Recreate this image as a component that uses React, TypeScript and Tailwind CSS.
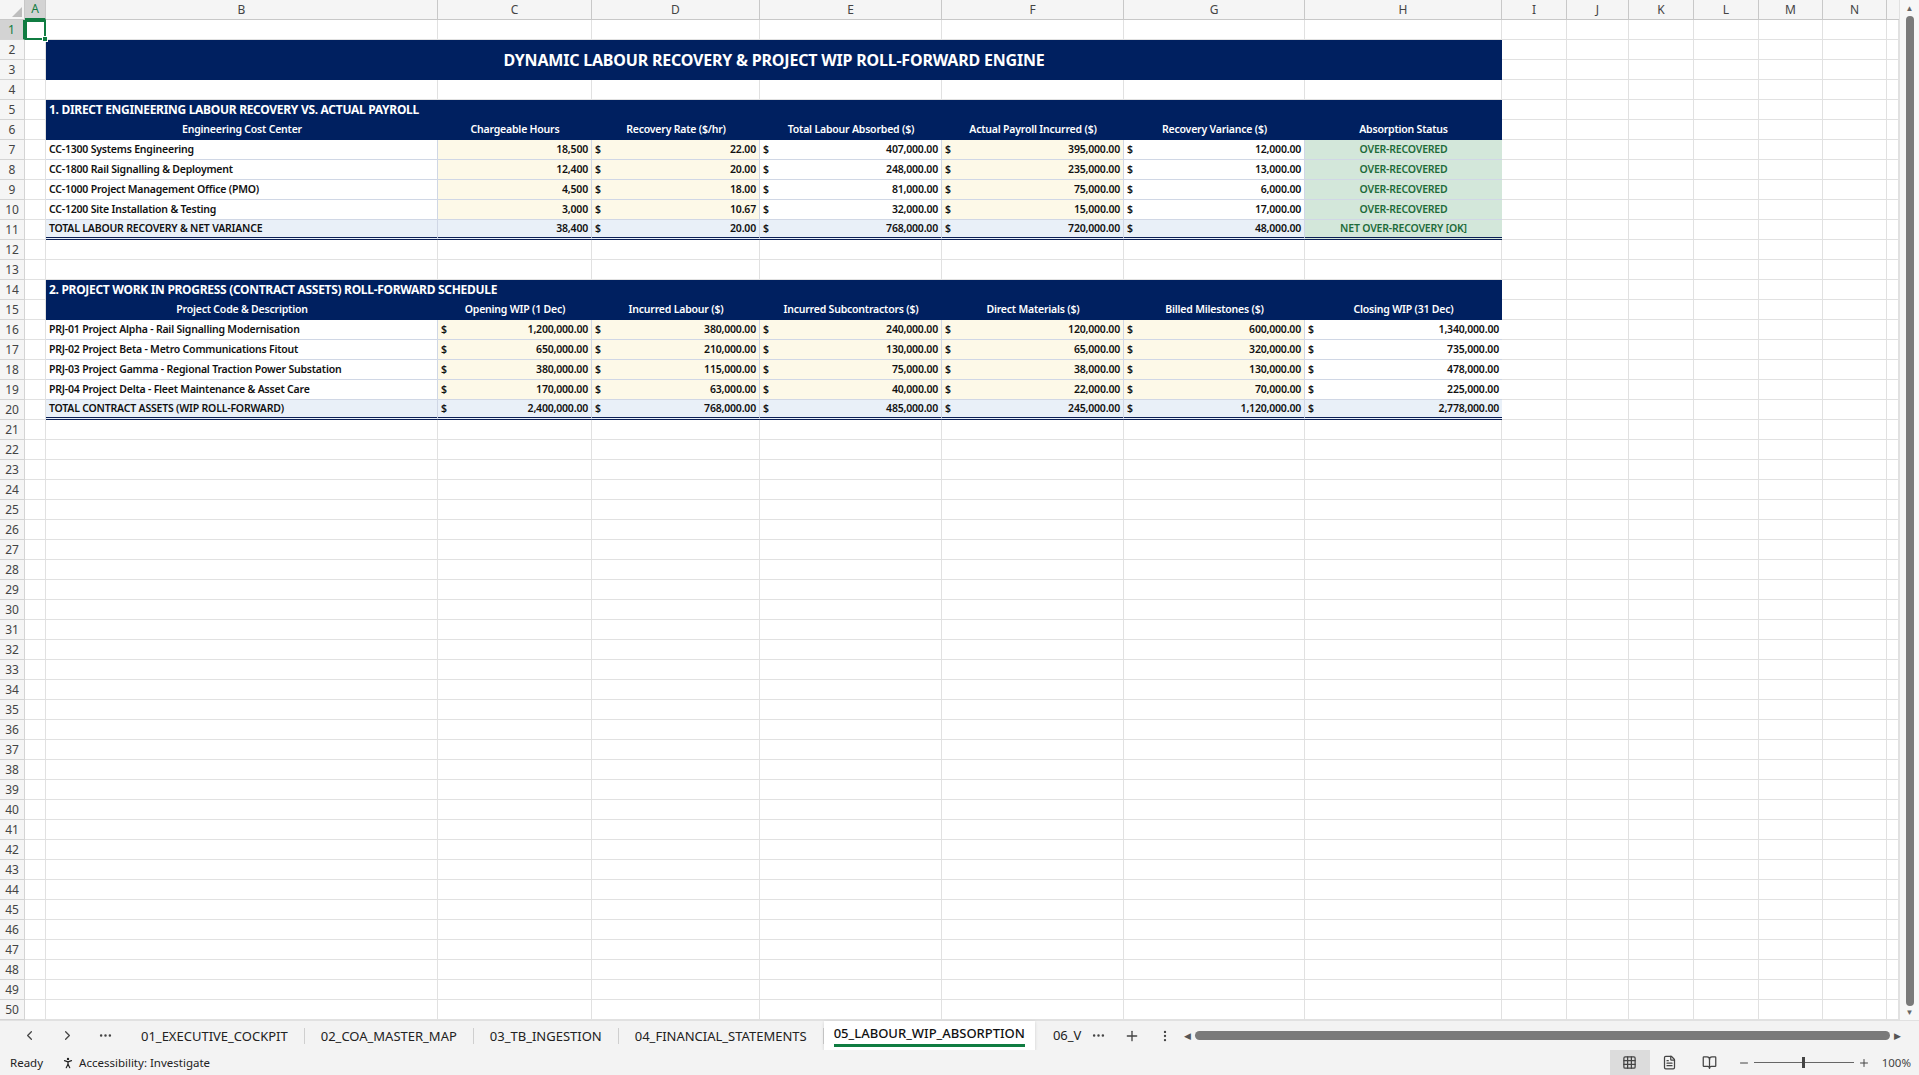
import { ChevronLeft, ChevronRight, MoreHorizontal, Plus, MoreVertical, Minus, PersonStanding, Grid3x3, FileText, BookOpen } from 'lucide-react'

const COLS = ['A', 'B', 'C', 'D', 'E', 'F', 'G', 'H', 'I', 'J', 'K', 'L', 'M', 'N']
const FONT = { fontFamily: '"Noto Sans", "Open Sans", sans-serif' }

type Cell = { t?: string; cur?: boolean; align?: 'l' | 'r' | 'c'; bg?: string; color?: string }

const Y = 'bg-[#fdf9e8]'
const W = 'bg-white'
const T = 'bg-[#e9f0f8]'
const G = 'bg-[#d3e7da]'

const labour = [
  ['CC-1300 Systems Engineering', '18,500', '22.00', '407,000.00', '395,000.00', '12,000.00'],
  ['CC-1800 Rail Signalling & Deployment', '12,400', '20.00', '248,000.00', '235,000.00', '13,000.00'],
  ['CC-1000 Project Management Office (PMO)', '4,500', '18.00', '81,000.00', '75,000.00', '6,000.00'],
  ['CC-1200 Site Installation & Testing', '3,000', '10.67', '32,000.00', '15,000.00', '17,000.00'],
]

const wip = [
  ['PRJ-01 Project Alpha - Rail Signalling Modernisation', '1,200,000.00', '380,000.00', '240,000.00', '120,000.00', '600,000.00', '1,340,000.00'],
  ['PRJ-02 Project Beta - Metro Communications Fitout', '650,000.00', '210,000.00', '130,000.00', '65,000.00', '320,000.00', '735,000.00'],
  ['PRJ-03 Project Gamma - Regional Traction Power Substation', '380,000.00', '115,000.00', '75,000.00', '38,000.00', '130,000.00', '478,000.00'],
  ['PRJ-04 Project Delta - Fleet Maintenance & Asset Care', '170,000.00', '63,000.00', '40,000.00', '22,000.00', '70,000.00', '225,000.00'],
]

function TableCell({ c, total, last }: { c: Cell; total?: boolean; last?: boolean }) {
  return (
    <div
      className={`flex items-center px-[3px] text-[10.5px] font-semibold tracking-[-0.2px] ${c.bg ?? W} ${c.color ?? 'text-[#111]'} ${
        total ? 'border-b-[3px] border-double border-b-[#0b1f55]' : 'border-b border-b-[#d0d7e5]'
      } ${last ? '' : 'border-r border-r-[#d0d7e5]'} ${
        c.cur ? 'justify-between' : c.align === 'r' ? 'justify-end' : c.align === 'c' ? 'justify-center' : 'justify-start'
      }`}
    >
      {c.cur && <span>$</span>}
      <span className="whitespace-nowrap">{c.t}</span>
    </div>
  )
}

function Table({ rows, totalRow }: { rows: Cell[][]; totalRow: Cell[] }) {
  return (
    <>
      {rows.map((r, i) => (
        <Row key={i} n={0} cells={r} />
      ))}
      <Row n={0} cells={totalRow} total />
    </>
  )
}

function Row({ cells, total }: { n: number; cells: Cell[]; total?: boolean }) {
  return (
    <>
      {cells.map((c, i) => (
        <TableCell key={i} c={c} total={total} last={i === cells.length - 1} />
      ))}
    </>
  )
}

function Empty({ n }: { n: number }) {
  return (
    <>
      {Array.from({ length: n }).map((_, i) => (
        <div key={i} className="border-r border-b border-[#e1e1e1]" />
      ))}
    </>
  )
}

function RowHead({ n, active }: { n: number; active?: boolean }) {
  return (
    <div
      className={`flex items-center justify-center border-r border-b border-[#d4d4d4] text-[12px] ${
        active ? 'bg-[#d3d3d3] text-[#107c41] border-r-2 border-r-[#107c41]' : 'bg-[#f5f5f5] text-[#444]'
      }`}
    >
      {n}
    </div>
  )
}

function Navy({ children, span, className = '' }: { children?: React.ReactNode; span: string; className?: string }) {
  return <div className={`${span} flex items-center bg-[#002060] text-white ${className}`}>{children}</div>
}

export default function App() {
  const labourRows: Cell[][] = labour.map(r => [
    { t: r[0] },
    { t: r[1], align: 'r', bg: Y },
    { t: r[2], cur: true, bg: Y },
    { t: r[3], cur: true },
    { t: r[4], cur: true, bg: Y },
    { t: r[5], cur: true },
    { t: 'OVER-RECOVERED', align: 'c', bg: G, color: 'text-[#1e6b3a]' },
  ])
  const labourTotal: Cell[] = [
    { t: 'TOTAL LABOUR RECOVERY & NET VARIANCE', bg: T },
    { t: '38,400', align: 'r', bg: T },
    { t: '20.00', cur: true, bg: T },
    { t: '768,000.00', cur: true, bg: T },
    { t: '720,000.00', cur: true, bg: T },
    { t: '48,000.00', cur: true, bg: T },
    { t: 'NET OVER-RECOVERY [OK]', align: 'c', bg: G, color: 'text-[#1e6b3a]' },
  ]
  const wipRows: Cell[][] = wip.map(r => [
    { t: r[0] },
    { t: r[1], cur: true, bg: Y },
    { t: r[2], cur: true, bg: Y },
    { t: r[3], cur: true, bg: Y },
    { t: r[4], cur: true, bg: Y },
    { t: r[5], cur: true, bg: Y },
    { t: r[6], cur: true },
  ])
  const wipTotal: Cell[] = ['TOTAL CONTRACT ASSETS (WIP ROLL-FORWARD)', '2,400,000.00', '768,000.00', '485,000.00', '245,000.00', '1,120,000.00', '2,778,000.00'].map(
    (t, i) => (i === 0 ? { t, bg: T } : { t, cur: true, bg: T }),
  )

  const h1 = ['Engineering Cost Center', 'Chargeable Hours', 'Recovery Rate ($/hr)', 'Total Labour Absorbed ($)', 'Actual Payroll Incurred ($)', 'Recovery Variance ($)', 'Absorption Status']
  const h2 = ['Project Code & Description', 'Opening WIP (1 Dec)', 'Incurred Labour ($)', 'Incurred Subcontractors ($)', 'Direct Materials ($)', 'Billed Milestones ($)', 'Closing WIP (31 Dec)']

  const rows: React.ReactNode[] = []
  const tail = <Empty n={7} />
  for (let n = 1; n <= 50; n++) {
    if (n === 1) {
      rows.push(
        <div key={n} className="contents">
          <RowHead n={1} active />
          <div className="relative border-2 border-[#107c41]">
            <div className="absolute -right-[4px] -bottom-[4px] size-[6px] border border-white bg-[#107c41]" />
          </div>
          <Empty n={7} />
          {tail}
        </div>,
      )
    } else if (n === 2 || n === 3) {
      rows.push(
        <div key={n} className="contents">
          <RowHead n={n} />
          <Empty n={1} />
          {n === 2 && (
            <Navy span="col-span-7 row-span-2 justify-center text-[16px] font-bold tracking-[-0.2px]">
              DYNAMIC LABOUR RECOVERY &amp; PROJECT WIP ROLL-FORWARD ENGINE
            </Navy>
          )}
          {tail}
        </div>,
      )
    } else if (n === 5 || n === 14) {
      rows.push(
        <div key={n} className="contents">
          <RowHead n={n} />
          <Empty n={1} />
          <Navy span="col-span-7 px-[3px] text-[12px] font-bold tracking-[-0.3px]">
            {n === 5 ? '1. DIRECT ENGINEERING LABOUR RECOVERY VS. ACTUAL PAYROLL' : '2. PROJECT WORK IN PROGRESS (CONTRACT ASSETS) ROLL-FORWARD SCHEDULE'}
          </Navy>
          {tail}
        </div>,
      )
    } else if (n === 6 || n === 15) {
      rows.push(
        <div key={n} className="contents">
          <RowHead n={n} />
          <Empty n={1} />
          {(n === 6 ? h1 : h2).map(h => (
            <Navy key={h} span="justify-center text-[10.5px] font-semibold tracking-[-0.2px] whitespace-nowrap">
              {h}
            </Navy>
          ))}
          {tail}
        </div>,
      )
    } else if ((n >= 7 && n <= 11) || (n >= 16 && n <= 20)) {
      const first = n === 7 || n === 16
      if (first) {
        const data = n === 7 ? labourRows : wipRows
        const tot = n === 7 ? labourTotal : wipTotal
        ;[...data, tot].forEach((r, i) => {
          const rn = n + i
          rows.push(
            <div key={rn} className="contents">
              <RowHead n={rn} />
              <Empty n={1} />
              <div className={`contents ${rn === 11 ? '[&>div:nth-child(2)]:relative' : ''}`}>
                <Row n={rn} cells={r} total={i === 4} />
              </div>
              {tail}
            </div>,
          )
        })
      }
    } else {
      rows.push(
        <div key={n} className="contents">
          <RowHead n={n} />
          <Empty n={8} />
          {tail}
        </div>,
      )
    }
  }

  return (
    <div className="flex h-[1075px] w-[1919px] flex-col overflow-hidden bg-white text-[#111]" style={FONT}>
      <div className="flex min-h-0 flex-1">
        <div className="grid flex-1 auto-rows-[20px] grid-cols-[25px_21px_392px_154px_168px_182px_182px_181px_197px_65px_62px_65px_65px_64px_64px_1fr] content-start">
          <div className="relative border-r border-b border-[#c8c8c8] bg-[#f5f5f5]">
            <div className="absolute right-[2px] bottom-[2px] h-0 w-0 border-t-[10px] border-l-[10px] border-t-transparent border-l-transparent border-b-0 border-r-[0px]" />
            <svg className="absolute right-[2px] bottom-[2px]" width="10" height="10"><path d="M10 0 L10 10 L0 10 Z" fill="#bdbdbd" /></svg>
          </div>
          {COLS.map((c, i) => (
            <div
              key={c}
              className={`flex items-center justify-center border-r border-b text-[12px] ${
                i === 0 ? 'bg-[#d3d3d3] text-[#107c41] border-b-2 border-b-[#107c41] border-r-[#c8c8c8]' : 'bg-[#f5f5f5] text-[#444] border-[#c8c8c8]'
              }`}
            >
              {c}
            </div>
          ))}
          <div className="border-b border-[#c8c8c8] bg-[#f5f5f5]" />
          {rows}
        </div>
        <div className="flex w-[20px] flex-col items-center border-l border-[#e1e1e1] bg-[#f7f7f7] py-[2px]">
          <div className="text-[8px] text-[#666]">▲</div>
          <div className="mt-[2px] w-[8px] flex-1 rounded-full bg-[#7a7a7a]" />
          <div className="text-[8px] text-[#666]">▼</div>
        </div>
      </div>

      <div className="flex h-[30px] items-center border-t border-[#e1e1e1] bg-[#f3f3f3] text-[13px] text-[#222]">
        <div className="flex w-[125px] items-center justify-around pl-[10px] text-[#444]">
          <ChevronLeft size={15} />
          <ChevronRight size={15} />
          <MoreHorizontal size={15} />
        </div>
        {['01_EXECUTIVE_COCKPIT', '02_COA_MASTER_MAP', '03_TB_INGESTION', '04_FINANCIAL_STATEMENTS'].map(t => (
          <div key={t} className="border-r border-[#cfcfcf] px-[16px] leading-[16px]">
            {t}
          </div>
        ))}
        <div className="flex h-full flex-col justify-center bg-white px-[10px] shadow-[0_1px_3px_rgba(0,0,0,0.15)]">
          <span className="font-medium leading-[16px] text-[#111]">05_LABOUR_WIP_ABSORPTION</span>
          <span className="mt-[3px] h-[3px] bg-[#107c41]" />
        </div>
        <div className="pl-[18px]">06_V</div>
        <MoreHorizontal size={15} className="ml-[10px] text-[#444]" />
        <Plus size={16} className="ml-[18px] text-[#444]" />
        <MoreVertical size={14} className="ml-[18px] text-[#444]" />
        <div className="ml-[12px] flex flex-1 items-center gap-[4px] pr-[18px] text-[#555]">
          <span className="text-[9px]">◀</span>
          <div className="h-[9px] flex-1 rounded-full bg-[#7a7a7a]" />
          <span className="text-[9px]">▶</span>
        </div>
      </div>

      <div className="flex h-[25px] items-center bg-[#f3f3f3] text-[11.5px] text-[#222]">
        <span className="pl-[10px]">Ready</span>
        <span className="ml-[18px] flex items-center gap-[4px]">
          <PersonStanding size={14} />
          Accessibility: Investigate
        </span>
        <div className="ml-auto flex h-full items-center text-[#444]">
          <div className="flex h-full w-[40px] items-center justify-center bg-[#dcdcdc]">
            <Grid3x3 size={15} />
          </div>
          <div className="flex w-[40px] justify-center">
            <FileText size={15} />
          </div>
          <div className="flex w-[40px] justify-center">
            <BookOpen size={15} />
          </div>
          <Minus size={12} className="ml-[8px]" />
          <div className="relative mx-[4px] h-[1px] w-[100px] bg-[#666]">
            <div className="absolute top-[-5px] left-[48px] h-[11px] w-[3px] bg-[#444]" />
          </div>
          <Plus size={12} />
          <span className="ml-[12px] pr-[8px]">100%</span>
        </div>
      </div>
    </div>
  )
}
